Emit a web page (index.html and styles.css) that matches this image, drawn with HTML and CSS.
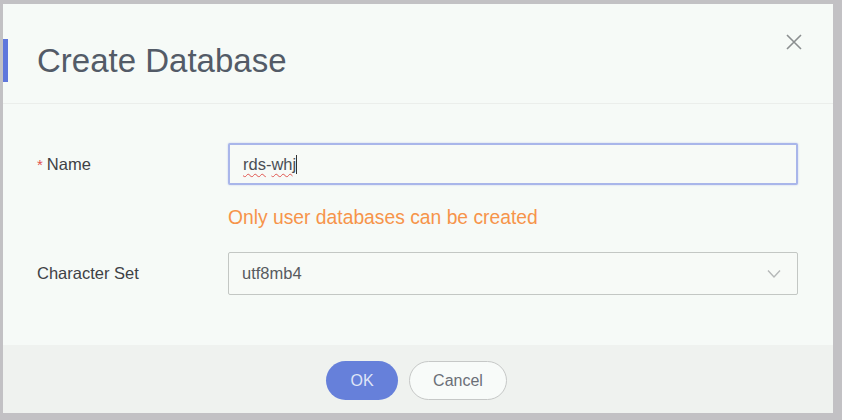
FILE: index.html
```html
<!DOCTYPE html>
<html>
<head>
<meta charset="utf-8">
<link rel="stylesheet" href="styles.css">
</head>
<body>
<div class="dialog">
  <div class="header">
    <h1 class="title">Create Database</h1>
    <button class="close" aria-label="Close">
      <svg width="16" height="16" viewBox="0 0 16 16"><path d="M1 1 L15 15 M15 1 L1 15" stroke="#8b8f90" stroke-width="1.6" fill="none"/></svg>
    </button>
  </div>
  <div class="body">
    <div class="form">
      <label class="label"><span class="req">*</span>Name</label>
      <div class="input focus"><span class="spell">rds</span>-<span class="spell">wh</span><span class="caret">j</span></div>
      <div></div>
      <div class="warn">Only user databases can be created</div>
      <label class="label">Character Set</label>
      <div class="input select">
        <span>utf8mb4</span>
        <svg width="14" height="10" viewBox="0 0 14 10"><path d="M1 1.5 L7 8 L13 1.5" stroke="#b5b8b8" stroke-width="1.4" fill="none"/></svg>
      </div>
    </div>
  </div>
  <div class="footer">
    <button class="btn ok">OK</button>
    <button class="btn cancel">Cancel</button>
  </div>
</div>
</body>
</html>
```
FILE: styles.css
```css
html, body {
  margin: 0;
  padding: 0;
}
body {
  background: #c2c1c4;
  width: 842px;
  height: 420px;
  overflow: hidden;
  font-family: "Liberation Sans", Arial, sans-serif;
  padding-top: 4px;
  padding-left: 3px;
  box-sizing: border-box;
}
.dialog {
  width: 830px;
  height: 409px;
  background: #f6faf7;
  display: flex;
  flex-direction: column;
}
.header {
  height: 100px;
  border-bottom: 1px solid #ebeeeb;
  display: flex;
  align-items: center;
  justify-content: space-between;
  box-sizing: border-box;
  position: relative;
}
.header::before {
  content: "";
  position: absolute;
  left: 0;
  top: 35px;
  width: 5px;
  height: 43px;
  background: #5f77dc;
}
.title {
  margin: 14px 0 0 34px;
  font-weight: normal;
  font-size: 33px;
  color: #535b67;
  letter-spacing: 0;
}
.close {
  border: 0;
  background: none;
  padding: 0;
  margin: 0 31px 24px 0;
  width: 16px;
  height: 16px;
  display: flex;
}
.body {
  flex: 1;
  padding: 39px 0 0 34px;
}
.form {
  display: grid;
  grid-template-columns: 191px 570px;
  align-items: center;
}
.label {
  font-size: 16.5px;
  color: #3e4145;
}
.req {
  color: #e2514c;
  margin-right: 4px;
  font-size: 15px;
}
.input {
  height: 42px;
  box-sizing: border-box;
  border: 1.5px solid #c3c7c4;
  border-radius: 2px;
  background: #f7faf7;
  padding: 0 13px;
  display: flex;
  align-items: center;
  font-size: 16.5px;
  color: #575b60;
}
.input.focus {
  border: 2px solid #a9b6ea;
  box-shadow: 0 0 2px rgba(120, 140, 230, 0.4);
  color: #4a4e54;
}
.spell {
  text-decoration: underline wavy #e0554f;
  text-decoration-thickness: 1px;
  text-underline-offset: 3px;
}
.caret {
  border-right: 1.5px solid #333;
}
.warn {
  font-size: 19.3px;
  color: #f6944a;
  line-height: 26px;
  margin: 20px 0 21px 0;
}
.select {
  justify-content: space-between;
  height: 43px;
  padding-right: 16px;
}
.footer {
  height: 68px;
  background: #eff2ef;
  display: flex;
  justify-content: center;
  align-items: flex-start;
  gap: 11px;
  padding-top: 16px;
  padding-right: 3px;
  box-sizing: border-box;
}
.btn {
  height: 39px;
  border-radius: 20px;
  font-family: "Liberation Sans", Arial, sans-serif;
  font-size: 16px;
  padding: 0;
}
.ok {
  width: 72px;
  background: #6680da;
  border: 0;
  color: #dfe5f7;
}
.cancel {
  width: 98px;
  background: #f8fbf9;
  border: 1.5px solid #c6c8c7;
  color: #6b6f77;
}
```
